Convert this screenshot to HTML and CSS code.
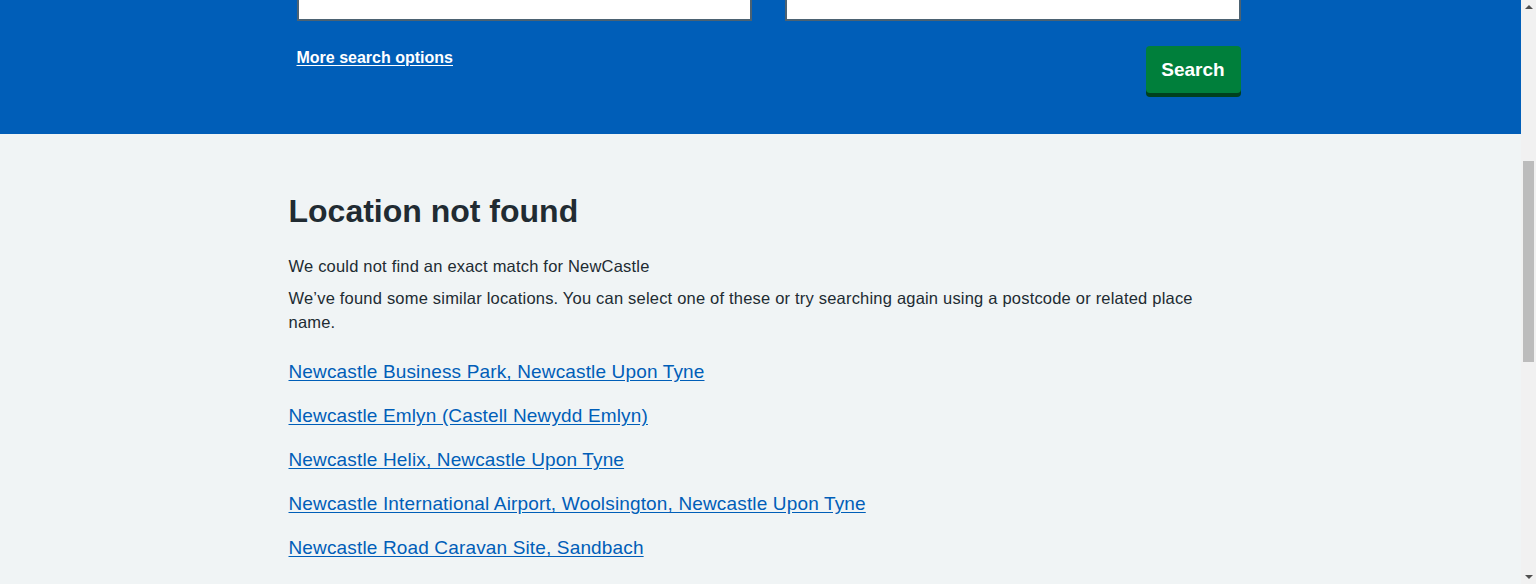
FILE: index.html
```html
<!DOCTYPE html>
<html lang="en">
<head>
<meta charset="utf-8">
<title>Find a pharmacy - NHS</title>
<link rel="stylesheet" href="styles.css">
</head>
<body>
<header class="site-header">
  <div class="container header-row">
    <a class="logo" href="#" aria-label="NHS homepage">
      <svg width="100" height="40" viewBox="0 0 100 40" aria-hidden="true"><rect width="100" height="40" fill="#fff"/></svg>
      <span class="logo-text">NHS</span>
    </a>
    <span class="header-search">Search the NHS website</span>
  </div>
  <nav class="header-nav">
    <div class="container nav-row">
      <a href="#">Health A to Z</a>
      <a href="#">Live Well</a>
      <a href="#">Mental health</a>
      <a href="#">Care and support</a>
      <a href="#">Pregnancy</a>
      <a href="#">NHS services</a>
    </div>
  </nav>
</header>

<section class="search-band" id="band">
  <div class="container band-inner">
    <h1 class="band-title">Find a pharmacy</h1>
    <p class="band-lead">Search for a pharmacy near you by location or by name.</p>
    <form class="search-form">
      <div class="form-grid">
        <div class="field">
          <label class="field-label" for="loc">Location</label>
          <span class="field-hint">Enter a town, city or postcode</span>
          <input class="field-input" id="loc" type="text">
        </div>
        <div class="field">
          <label class="field-label" for="name">Pharmacy name</label>
          <span class="field-hint">Optional</span>
          <input class="field-input" id="name" type="text">
        </div>
      </div>
      <div class="form-actions">
        <a class="more-link" href="#">More search options</a>
        <button class="search-button" type="button">Search</button>
      </div>
    </form>
  </div>
</section>

<main class="main">
  <div class="container main-inner">
    <h2 class="heading">Location not found</h2>
    <p class="body-text">We could not find an exact match for NewCastle</p>
    <p class="body-text">We’ve found some similar locations. You can select one of these or try searching again using a postcode or related place name.</p>
    <ul class="results">
      <li><a href="#">Newcastle Business Park, Newcastle Upon Tyne</a></li>
      <li><a href="#">Newcastle Emlyn (Castell Newydd Emlyn)</a></li>
      <li><a href="#">Newcastle Helix, Newcastle Upon Tyne</a></li>
      <li><a href="#">Newcastle International Airport, Woolsington, Newcastle Upon Tyne</a></li>
      <li><a href="#">Newcastle Road Caravan Site, Sandbach</a></li>
      <li><a href="#">Newcastle Upon Tyne</a></li>
      <li><a href="#">Newcastle-under-Lyme, Staffordshire</a></li>
      <li><a href="#">Newcastleton, Scottish Borders</a></li>
    </ul>
  </div>
</main>

<footer class="site-footer">
  <div class="container footer-inner">
    <ul class="footer-links">
      <li><a href="#">NHS sites</a></li>
      <li><a href="#">About us</a></li>
      <li><a href="#">Contact us</a></li>
      <li><a href="#">Profile editor login</a></li>
      <li><a href="#">Sitemap</a></li>
      <li><a href="#">Accessibility statement</a></li>
      <li><a href="#">Our policies</a></li>
      <li><a href="#">Cookies</a></li>
    </ul>
    <p class="copyright">© Crown copyright</p>
  </div>
</footer>

<div class="scrollbar" aria-hidden="true">
  <span class="scroll-arrow scroll-arrow-up"></span>
  <div class="scroll-track">
    <span class="scroll-thumb"></span>
  </div>
  <span class="scroll-arrow scroll-arrow-down"></span>
</div>
<script src="script.js"></script>
</body>
</html>
```

FILE: styles.css
```css
* { box-sizing: border-box; }

html, body {
  margin: 0;
  padding: 0;
}

body {
  font-family: "Liberation Sans", Arial, sans-serif;
  color: #212b32;
  background: #f0f4f5;
  font-size: 16px;
  line-height: 24px;
  padding-right: 15px;
}

.container {
  max-width: 960px;
  margin: 0 auto;
}

/* Header (scrolled out of view) */
.site-header {
  background: #005eb8;
  color: #fff;
}

.header-row {
  height: 80px;
  display: flex;
  align-items: center;
  justify-content: space-between;
  padding: 0 16px;
}

.logo {
  position: relative;
  display: block;
  width: 100px;
  height: 40px;
}

.logo svg { display: block; }

.logo-text {
  position: absolute;
  inset: 0;
  color: #005eb8;
  font-weight: 700;
  font-style: italic;
  font-size: 34px;
  line-height: 40px;
  text-align: center;
}

.header-search {
  background: #fff;
  color: #4c6272;
  padding: 8px 12px;
  border-radius: 4px;
  width: 260px;
}

.header-nav {
  border-top: 1px solid rgba(255, 255, 255, 0.2);
  height: 56px;
}

.nav-row {
  display: flex;
  gap: 32px;
  padding: 0 16px;
  height: 55px;
  align-items: center;
}

.nav-row a {
  color: #fff;
  text-decoration: none;
  font-size: 16px;
}

/* Search band */
.search-band {
  background: #005eb8;
  color: #fff;
  padding: 57px 0 41px;
}

.band-inner {
  padding: 0 0 0 16px;
}

.band-title {
  margin: 0 0 16px;
  font-size: 48px;
  line-height: 56px;
  font-weight: 700;
}

.band-lead {
  margin: 0 0 40px;
  font-size: 19px;
  line-height: 28px;
}

.form-grid {
  display: grid;
  grid-template-columns: 1fr 1fr;
  column-gap: 33px;
}

.field {
  display: flex;
  flex-direction: column;
}

.field-label {
  font-size: 19px;
  line-height: 28px;
  font-weight: 700;
  margin-bottom: 4px;
}

.field-hint {
  font-size: 16px;
  line-height: 24px;
  margin-bottom: 16px;
}

.field-input {
  display: block;
  width: 100%;
  height: 40px;
  margin: 0;
  border: 2px solid #4c6272;
  border-radius: 0;
  background: #fff;
  font: inherit;
  padding: 4px 8px;
}

.form-actions {
  margin-top: 25px;
  display: flex;
  justify-content: space-between;
  align-items: flex-start;
}

.more-link {
  color: #fff;
  font-weight: 700;
  font-size: 16px;
  line-height: 24px;
  text-decoration: underline;
  text-underline-offset: 2px;
}

.search-button {
  width: 95px;
  height: 47px;
  margin: 0;
  padding: 0;
  border: 0;
  border-radius: 4px;
  background: #007f3b;
  box-shadow: 0 4px 0 #00401e;
  color: #fff;
  font-family: inherit;
  font-weight: 700;
  font-size: 19px;
  line-height: 47px;
  text-align: center;
  cursor: pointer;
}

/* Main results */
.main {
  padding: 57px 0 48px;
}

.main-inner {
  padding: 0 8px;
}

.heading {
  margin: 0 0 23px;
  font-size: 32px;
  line-height: 40px;
  font-weight: 700;
}

.body-text {
  margin: 0 0 8px;
  max-width: 920px;
  font-size: 16.5px;
  letter-spacing: 0.2px;
  line-height: 24px;
}

.results {
  list-style: none;
  margin: 24px 0 0;
  padding: 0;
}

.results li {
  font-size: 19px;
  line-height: 28px;
  letter-spacing: 0.15px;
  margin-bottom: 16px;
}

.results a {
  color: #005eb8;
  text-decoration: underline;
  text-underline-offset: 2px;
}

/* Footer (below the fold) */
.site-footer {
  background: #d8dde0;
  border-top: 4px solid #005eb8;
  min-height: 427px;
  padding: 32px 0;
}

.footer-inner {
  padding: 0 16px;
}

.footer-links {
  list-style: none;
  margin: 0 0 32px;
  padding: 0;
  display: grid;
  grid-template-columns: repeat(3, 1fr);
  gap: 12px 32px;
}

.footer-links a {
  color: #003087;
  font-size: 16px;
}

.copyright {
  margin: 0;
  color: #425563;
  font-size: 14px;
}

/* Window scrollbar drawn over the right edge */
.scrollbar {
  position: fixed;
  top: 0;
  right: 0;
  width: 15px;
  height: 100vh;
  background: #f1f1f1;
  display: flex;
  flex-direction: column;
}

.scroll-arrow {
  flex: 0 0 15px;
  display: flex;
  align-items: center;
  justify-content: center;
}

.scroll-arrow::before {
  content: "";
  width: 0;
  height: 0;
  border-left: 4px solid transparent;
  border-right: 4px solid transparent;
}

.scroll-arrow-up::before {
  border-bottom: 4px solid #505050;
  margin-top: -1px;
}

.scroll-arrow-down::before {
  border-top: 4px solid #505050;
  margin-bottom: -1px;
}

.scroll-track {
  flex: 1;
  padding: 146px 2px 0;
}

.scroll-thumb {
  display: block;
  height: 201px;
  background: #bcbcbc;
}
```

FILE: script.js
```js
(function () {
  function align() {
    var band = document.getElementById('band');
    if (!band) return;
    var bottom = band.getBoundingClientRect().bottom + window.scrollY;
    window.scrollTo(0, bottom - 134);
  }
  align();
  window.addEventListener('load', align);
})();
```
